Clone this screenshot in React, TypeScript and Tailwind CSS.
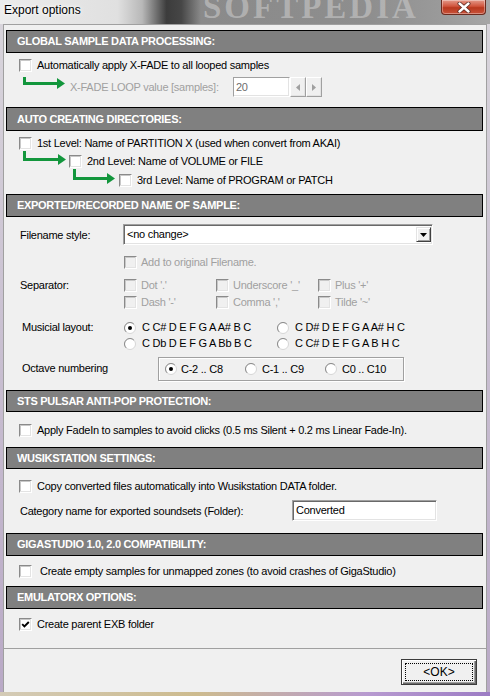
import React from "react";

const TXT = "font-['Liberation_Sans',Arial,sans-serif] text-[11px] leading-[13px] tracking-[-0.25px]";

function Check({ checked = false, disabled = false }: { checked?: boolean; disabled?: boolean }) {
  return (
    <span
      className={
        "relative block w-[13px] h-[13px] shrink-0 border border-t-[#8a8a8a] border-l-[#8a8a8a] border-r-white border-b-white shadow-[inset_-1px_-1px_0_#e3e3e3,inset_1px_1px_0_#c8c8c8] " +
        (disabled ? "bg-[#f0f0f0]" : "bg-white")
      }
    >
      {checked && (
        <svg className="absolute left-[1px] top-[1px]" width="9" height="9" viewBox="0 0 9 9">
          <path d="M1.2 4.2 L3.4 6.4 L7.8 2" fill="none" stroke="#000" strokeWidth="1.9" />
        </svg>
      )}
    </span>
  );
}

function Radio({ checked = false }: { checked?: boolean }) {
  return (
    <svg width="12" height="12" viewBox="0 0 12 12" className="block shrink-0">
      <circle cx="6" cy="6" r="5.5" fill="#fff" stroke="#d6d6d6" />
      <path d="M2.11 9.89 A5.5 5.5 0 0 1 9.89 2.11" fill="none" stroke="#8a8a8a" />
      {checked && <circle cx="6" cy="6" r="2" fill="#000" />}
    </svg>
  );
}

function Header({ title, cls }: { title: string; cls: string }) {
  return (
    <div
      className={
        "ml-[2px] w-[477px] shrink-0 border border-black bg-[#808080] flex items-center pl-[10px] font-['Liberation_Sans',Arial,sans-serif] font-bold text-[11px] tracking-[-0.3px] text-white " +
        cls
      }
    >
      {title}
    </div>
  );
}

function GreenArrow({ w, h, vx, hy, tip }: { w: number; h: number; vx: number; hy: number; tip: number }) {
  return (
    <svg width={w} height={h} viewBox={`0 0 ${w} ${h}`} className="block shrink-0">
      <rect x={vx} y={0} width={3} height={hy + 3} fill="#12963c" />
      <rect x={vx} y={hy} width={tip - 7 - vx} height={3} fill="#12963c" />
      <polygon points={`${tip - 8},${hy - 4} ${tip},${hy + 1.5} ${tip - 8},${hy + 7}`} fill="#12963c" />
    </svg>
  );
}

function SpinBtn({ dir }: { dir: "l" | "r" }) {
  return (
    <div className="w-[16px] h-[20px] bg-[#f0f0f0] border border-t-white border-l-white border-r-[#a0a0a0] border-b-[#a0a0a0] shadow-[inset_-1px_-1px_0_#e3e3e3] flex items-center justify-center">
      <svg width="4" height="7" viewBox="0 0 4 7">
        {dir === "l" ? <polygon points="4,0 0,3.5 4,7" fill="#a0a0a0" /> : <polygon points="0,0 4,3.5 0,7" fill="#a0a0a0" />}
      </svg>
    </div>
  );
}

export default function App() {
  return (
    <div className="w-[490px] h-[696px] overflow-hidden flex flex-col bg-[linear-gradient(to_bottom,#d9d6dc,#b9a9c6)]">
      {/* title bar */}
      <div className="relative h-[24px] shrink-0 overflow-hidden flex items-start justify-between bg-[linear-gradient(to_right,#ececec_0%,#e0e0e0_24%,#b8b8b8_29%,#3c3c3c_34%,#464646_37%,#8a8a8a_41%,#8e8e8e_75%,#9a9a9a_90%,#a6a6a6_100%)]">
        <span className="absolute left-[203px] top-[-9px] font-['Liberation_Serif',serif] font-bold text-[33px] leading-[33px] tracking-[3px] text-[#c9c9c9]/60">
          SOFTPEDIA
        </span>
        <span className="relative ml-[4px] mt-[3px] font-['Liberation_Sans',Arial,sans-serif] text-[12px] leading-[14px] text-black [text-shadow:0_0_6px_#ffffff,0_0_3px_#ffffff]">
          Export options
        </span>
        <div className="relative mr-[4px] w-[45px] h-[15px] rounded-b-[4px] border border-t-0 border-[#6b2a1e] bg-[linear-gradient(to_bottom,#e49a8a_0%,#d0543c_45%,#b8381e_55%,#c8523a_100%)] shadow-[inset_0_0_0_1px_rgba(255,255,255,0.35)] flex items-center justify-center">
          <svg width="14" height="11" viewBox="0 0 14 11">
            <path d="M2.5 1.5 L11.5 9.5 M11.5 1.5 L2.5 9.5" stroke="#5a2a22" strokeWidth="4" strokeLinecap="round" />
            <path d="M2.5 1.5 L11.5 9.5 M11.5 1.5 L2.5 9.5" stroke="#ffffff" strokeWidth="2.4" strokeLinecap="round" />
          </svg>
        </div>
      </div>

      {/* client area */}
      <div className={"mx-[3px] h-[668px] shrink-0 bg-[#f0f0f0] border-t border-l border-r border-[#a0a0a0] flex flex-col text-black " + TXT}>
        {/* Section 1 */}
        <Header title="GLOBAL SAMPLE DATA PROCESSING:" cls="mt-[5px] h-[23px]" />
        <div className="mt-[6px] pl-[15px] flex items-center h-[13px]">
          <Check />
          <span className="ml-[5px]">Automatically apply X-FADE to all looped samples</span>
        </div>
        <div className="mt-[5px] pl-[17px] flex items-start h-[20px]">
          <GreenArrow w={46} h={13} vx={2} hy={5} tip={44} />
          <span className="ml-[3px] w-[163px] self-center text-[#a0a0a0]">X-FADE LOOP value [samples]:</span>
          <div className="w-[57px] h-[20px] bg-white border border-t-[#a0a0a0] border-l-[#a0a0a0] border-r-white border-b-white shadow-[inset_-1px_-1px_0_#e3e3e3] flex items-center pl-[2px] text-[#6d6d6d]">
            20
          </div>
          <SpinBtn dir="l" />
          <SpinBtn dir="r" />
        </div>

        {/* Section 2 */}
        <Header title="AUTO CREATING DIRECTORIES:" cls="mt-[10px] h-[24px]" />
        <div className="mt-[6px] pl-[15px] flex items-center h-[13px]">
          <Check />
          <span className="ml-[5px]">1st Level: Name of PARTITION X (used when convert from AKAI)</span>
        </div>
        <div className="mt-[1px] pl-[17px] flex items-start h-[18px]">
          <GreenArrow w={46} h={15} vx={2} hy={7} tip={45} />
          <div className="ml-[2px] mt-[4px] flex items-center h-[13px]">
            <Check />
            <span className="ml-[5px]">2nd Level: Name of VOLUME or FILE</span>
          </div>
        </div>
        <div className="pl-[67px] flex items-start h-[18px]">
          <GreenArrow w={46} h={16} vx={2} hy={8} tip={44} />
          <div className="ml-[2px] mt-[5px] flex items-center h-[13px]">
            <Check />
            <span className="ml-[5px]">3rd Level: Name of PROGRAM or PATCH</span>
          </div>
        </div>

        {/* Section 3 */}
        <Header title="EXPORTED/RECORDED NAME OF SAMPLE:" cls="mt-[7px] h-[23px]" />
        <div className="mt-[7px] flex items-center h-[21px]">
          <span className="pl-[16px] w-[119px] mt-[2px]">Filename style:</span>
          <div className="w-[310px] h-[21px] bg-white border border-t-[#a0a0a0] border-l-[#a0a0a0] border-r-white border-b-white shadow-[inset_1px_1px_0_#696969,inset_-1px_-1px_0_#e3e3e3] flex items-center justify-between pl-[3px] pr-[1px]">
            <span>{"<no change>"}</span>
            <div className="w-[15px] h-[15px] bg-[#f0f0f0] border border-t-[#e3e3e3] border-l-[#e3e3e3] border-r-[#404040] border-b-[#404040] shadow-[inset_1px_1px_0_#ffffff,inset_-1px_-1px_0_#a0a0a0] flex items-center justify-center">
              <svg width="7" height="4" viewBox="0 0 7 4">
                <polygon points="0,0 7,0 3.5,4" fill="#000" />
              </svg>
            </div>
          </div>
        </div>
        <div className="mt-[11px] pl-[120px] flex items-center h-[13px]">
          <Check disabled />
          <span className="ml-[4px] text-[#a0a0a0]">Add to original Filename.</span>
        </div>

        <div className="mt-[10px] flex items-start">
          <div className="pl-[16px] w-[120px] h-[13px] flex items-center">Separator:</div>
          <div className="w-[92px] flex flex-col gap-[4px]">
            <div className="flex items-center h-[13px]">
              <Check disabled />
              <span className="ml-[4px] text-[#a0a0a0]">{"Dot '.'"}</span>
            </div>
            <div className="flex items-center h-[13px]">
              <Check disabled />
              <span className="ml-[4px] text-[#a0a0a0]">{"Dash '-'"}</span>
            </div>
          </div>
          <div className="w-[102px] flex flex-col gap-[4px]">
            <div className="flex items-center h-[13px]">
              <Check disabled />
              <span className="ml-[4px] text-[#a0a0a0]">{"Underscore '_'"}</span>
            </div>
            <div className="flex items-center h-[13px]">
              <Check disabled />
              <span className="ml-[4px] text-[#a0a0a0]">{"Comma ','"}</span>
            </div>
          </div>
          <div className="flex flex-col gap-[4px]">
            <div className="flex items-center h-[13px]">
              <Check disabled />
              <span className="ml-[4px] text-[#a0a0a0]">{"Plus '+'"}</span>
            </div>
            <div className="flex items-center h-[13px]">
              <Check disabled />
              <span className="ml-[4px] text-[#a0a0a0]">{"Tilde '~'"}</span>
            </div>
          </div>
        </div>

        <div className="mt-[12px] flex items-start">
          <div className="pl-[18px] w-[120px] h-[13px] flex items-center">Musicial layout:</div>
          <div className="w-[153px] flex flex-col gap-[3px]">
            <div className="flex items-center h-[13px]">
              <Radio checked />
              <span className="ml-[6px]">C C# D E F G A A# B C</span>
            </div>
            <div className="flex items-center h-[13px]">
              <Radio />
              <span className="ml-[6px]">C Db D E F G A Bb B C</span>
            </div>
          </div>
          <div className="flex flex-col gap-[3px]">
            <div className="flex items-center h-[13px]">
              <Radio />
              <span className="ml-[6px]">C D# D E F G A A# H C</span>
            </div>
            <div className="flex items-center h-[13px]">
              <Radio />
              <span className="ml-[6px]">C C# D E F G A B H C</span>
            </div>
          </div>
        </div>

        <div className="mt-[7px] flex items-center h-[24px]">
          <div className="pl-[18px] w-[154px] mb-[2px]">Octave numbering</div>
          <div className="w-[246px] h-[24px] border border-[#a0a0a0] shadow-[inset_1px_1px_0_#ffffff,1px_1px_0_#ffffff] flex items-center pl-[6px]">
            <div className="w-[80px] flex items-center">
              <Radio checked />
              <span className="ml-[4px]">C-2 .. C8</span>
            </div>
            <div className="w-[80px] flex items-center">
              <Radio />
              <span className="ml-[5px]">C-1 .. C9</span>
            </div>
            <div className="w-[72px] flex items-center">
              <Radio />
              <span className="ml-[5px]">C0 .. C10</span>
            </div>
          </div>
        </div>

        {/* Section 4 */}
        <Header title="STS PULSAR ANTI-POP PROTECTION:" cls="mt-[9px] h-[22px]" />
        <div className="mt-[12px] pl-[15px] flex items-center h-[13px]">
          <Check />
          <span className="ml-[5px]">Apply FadeIn to samples to avoid clicks (0.5 ms Silent + 0.2 ms Linear Fade-In).</span>
        </div>

        {/* Section 5 */}
        <Header title="WUSIKSTATION SETTINGS:" cls="mt-[10px] h-[22px]" />
        <div className="mt-[11px] pl-[15px] flex items-center h-[13px]">
          <Check />
          <span className="ml-[5px]">Copy converted files automatically into Wusikstation DATA folder.</span>
        </div>
        <div className="mt-[7px] flex items-center h-[21px]">
          <span className="pl-[16px] w-[288px] mt-[1px]">Category name for exported soundsets (Folder):</span>
          <div className="w-[145px] h-[21px] bg-white border border-t-[#a0a0a0] border-l-[#a0a0a0] border-r-white border-b-white shadow-[inset_1px_1px_0_#696969,inset_-1px_-1px_0_#e3e3e3] flex items-center pl-[3px]">
            Converted
          </div>
        </div>

        {/* Section 6 */}
        <Header title="GIGASTUDIO 1.0, 2.0 COMPATIBILITY:" cls="mt-[12px] h-[23px]" />
        <div className="mt-[9px] pl-[15px] flex items-center h-[13px]">
          <Check />
          <span className="ml-[8px]">Create empty samples for unmapped zones (to avoid crashes of GigaStudio)</span>
        </div>

        {/* Section 7 */}
        <Header title="EMULATORX OPTIONS:" cls="mt-[8px] h-[23px]" />
        <div className="mt-[9px] pl-[15px] flex items-center h-[13px]">
          <Check checked />
          <span className="ml-[5px]">Create parent EXB folder</span>
        </div>

        <div className="mt-[17px] h-[1px] bg-[#a0a0a0] shrink-0" />

        <div className="mt-[10px] flex justify-end pr-[9px]">
          <div className="w-[76px] h-[26px] bg-[#f0f0f0] border border-[#3c3c3c] shadow-[inset_1px_1px_0_#ffffff,inset_-1px_-1px_0_#6a6a6a,inset_-2px_-2px_0_#a0a0a0] p-[3px]">
            <div className="w-full h-full border border-dotted border-black flex items-center justify-center text-[12px] tracking-normal">
              {"<OK>"}
            </div>
          </div>
        </div>
      </div>

      {/* bottom frame */}
      <div className="flex-1 bg-[linear-gradient(to_right,#d4cbb6,#cdbb8e_40%,#b79ad0_75%,#9c7cc4)]" />
    </div>
  );
}
